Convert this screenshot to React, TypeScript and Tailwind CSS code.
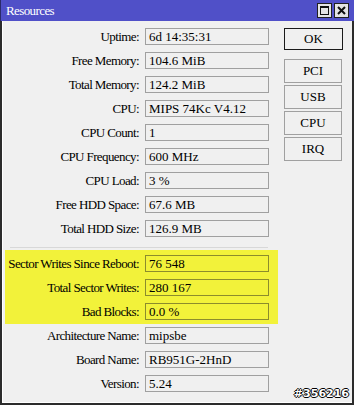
const top = [
  ["Uptime", "6d 14:35:31"],
  ["Free Memory", "104.6 MiB"],
  ["Total Memory", "124.2 MiB"],
  ["CPU", "MIPS 74Kc V4.12"],
  ["CPU Count", "1"],
  ["CPU Frequency", "600 MHz"],
  ["CPU Load", "3 %"],
  ["Free HDD Space", "67.6 MB"],
  ["Total HDD Size", "126.9 MB"],
];

const disk = [
  ["Sector Writes Since Reboot", "76 548"],
  ["Total Sector Writes", "280 167"],
  ["Bad Blocks", "0.0 %"],
];

const board = [
  ["Architecture Name", "mipsbe"],
  ["Board Name", "RB951G-2HnD"],
  ["Version", "5.24"],
];

function Row({ label, value, hl }: { label: string; value: string; hl?: boolean }) {
  return (
    <div className="flex h-[17px] items-center">
      <div className="w-[134px] text-right whitespace-nowrap tracking-[-0.6px]">{label}:</div>
      <div
        className={
          hl
            ? "ml-[6px] h-[17px] w-[124px] border border-[#8c8c2c] px-[3px] leading-[15px]"
            : "ml-[6px] h-[17px] w-[124px] border border-[#a0a0a0] px-[3px] leading-[15px]"
        }
      >
        {value}
      </div>
    </div>
  );
}

function Btn({ text, def }: { text: string; def?: boolean }) {
  return (
    <div
      className={
        def
          ? "flex h-[22px] w-[59px] items-center justify-center border border-[#1a1a1a] bg-[#f0f0f0]"
          : "flex h-[24px] w-[58px] items-center justify-center border border-[#a0a0a0] bg-[#f0f0f0]"
      }
    >
      {text}
    </div>
  );
}

export default function App() {
  return (
    <div className="relative flex h-[405px] w-[354px] flex-col bg-[#f0f0f0] font-['Liberation_Serif',serif] text-[13px] text-black">
      <div className="flex h-[21px] items-center justify-between border-l border-[#2a2a6a] bg-[#5050c8] pl-[5px] pr-[5px]">
        <span className="text-[13px] tracking-[-0.6px] text-white">Resources</span>
        <div className="flex gap-[2px]">
          <div className="flex h-[15px] w-[15px] items-center justify-center border border-[#202020] bg-[#e4e4e4]">
            <div className="h-[9px] w-[9px] border border-t-2 border-[#101010]" />
          </div>
          <div className="flex h-[15px] w-[15px] items-center justify-center border border-[#202020] bg-[#e4e4e4]">
            <svg width="9" height="9" viewBox="0 0 9 9">
              <path d="M1 1 L8 8 M8 1 L1 8" stroke="#101010" strokeWidth="2" />
            </svg>
          </div>
        </div>
      </div>
      <div className="flex flex-1 border-x-2 border-b-2 border-[#2c2c2c]">
        <div className="flex flex-1 border-l border-b border-white pl-[2px] pt-[7px]">
          <div className="flex w-[273px] flex-col">
            <div className="flex flex-col gap-[7px]">
              {top.map(([l, v]) => (
                <Row key={l} label={l} value={v} />
              ))}
            </div>
            <div className="ml-[5px] mt-[10px] h-[1px] w-[258px] bg-[#d8d8d8]" />
            <div className="mt-[2px] flex flex-col gap-[7px] bg-[#f2f23a] pb-[4px] pt-[5px]">
              {disk.map(([l, v]) => (
                <Row key={l} label={l} value={v} hl />
              ))}
            </div>
            <div className="mt-[3px] flex flex-col gap-[7px]">
              {board.map(([l, v]) => (
                <Row key={l} label={l} value={v} />
              ))}
            </div>
          </div>
          <div className="ml-[6px] flex flex-col">
            <Btn text="OK" def />
            <div className="mt-[9px] flex flex-col gap-[2px]">
              <Btn text="PCI" />
              <Btn text="USB" />
              <Btn text="CPU" />
              <Btn text="IRQ" />
            </div>
          </div>
        </div>
      </div>
      <div className="absolute bottom-[6px] right-[5px] font-['DejaVu_Sans',sans-serif] text-[11px] font-bold leading-none text-white [text-shadow:-1px_0_0_#000,1px_0_0_#000,0_-1px_0_#000,0_1px_0_#000]">
        #356216
      </div>
    </div>
  );
}
